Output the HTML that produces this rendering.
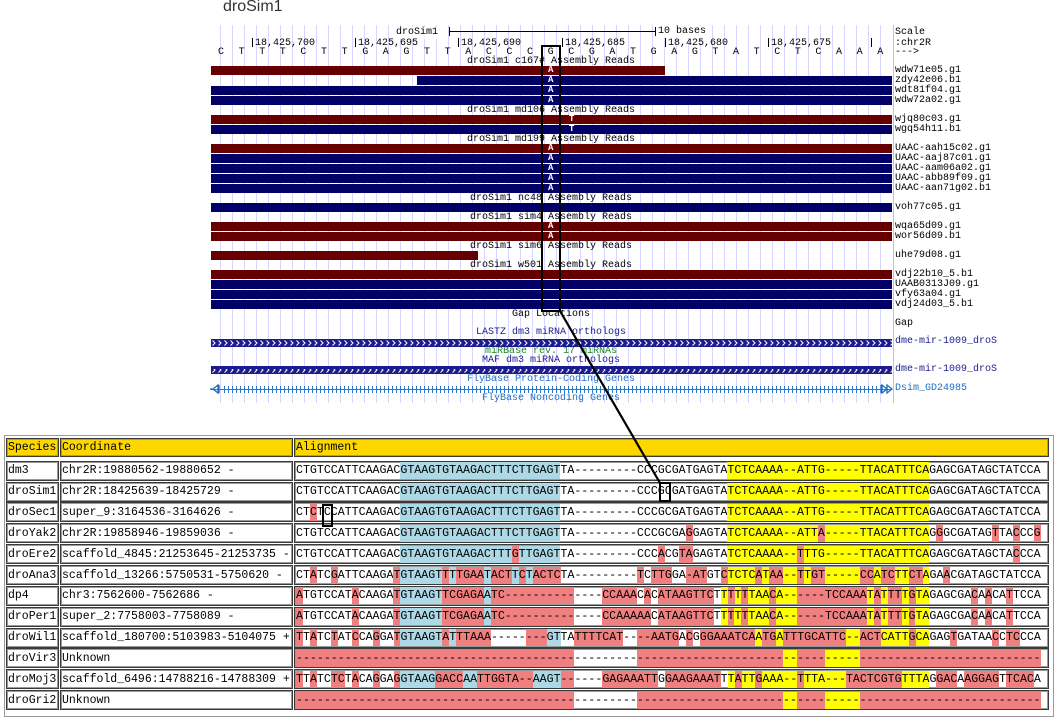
<!DOCTYPE html>
<html><head><meta charset="utf-8">
<style>
*{margin:0;padding:0;box-sizing:border-box}
body{width:1058px;height:717px;background:#fff;position:relative;overflow:hidden;font-family:"Liberation Mono",monospace}
.a{position:absolute}
.t{position:absolute;font-size:10px;line-height:12px;white-space:pre;color:#000}
.c{position:absolute;font-size:10px;line-height:12px;white-space:pre;width:300px;left:401px;text-align:center}
.bar{position:absolute;left:211px;width:681px;height:9px}
.R{background:#660000}.B{background:#000066}
.lt{position:absolute;font-size:9px;line-height:9px;color:#fff;font-weight:bold}
.cell{position:absolute;border:1px solid #3a3a3a;box-shadow:inset 0 0 0 1px #9a9a9a;background:#fff;height:20px}
.h{background:#ffd700;height:19px}
.tx{position:absolute;font-size:11.5px;line-height:17px;white-space:pre;color:#000}
.al{position:absolute;font-size:11.6px;line-height:17px;white-space:pre;color:#000}
.al span{display:inline-block;height:17px}
.r{background:#f08080}.b{background:#add8e6}.y{background:#ffff00}
</style></head><body>

<div class="a" style="left:223px;top:-2px;font-family:'Liberation Sans',sans-serif;font-size:16px;color:#333">droSim1</div>

<div class="a" style="left:220px;top:25px;width:672px;height:378px;background:repeating-linear-gradient(to right,#d6d6ff 0 1px,transparent 1px 12px)"></div>
<div class="a" style="left:893px;top:25px;width:1px;height:378px;background:#f0b0b0"></div>

<div class="t" style="left:396px;top:27px;background:#fff">droSim1</div>
<div class="a" style="left:449px;top:31px;width:206px;height:1px;background:#000"></div>
<div class="a" style="left:449px;top:27px;width:1px;height:9px;background:#000"></div>
<div class="a" style="left:655px;top:27px;width:1px;height:9px;background:#000"></div>
<div class="t" style="left:658px;top:26px;background:#fff">10 bases</div>

<div class="a" style="left:252px;top:38px;width:1px;height:9px;background:#000"></div>
<div class="a" style="left:355px;top:38px;width:1px;height:9px;background:#000"></div>
<div class="a" style="left:458px;top:38px;width:1px;height:9px;background:#000"></div>
<div class="a" style="left:562px;top:38px;width:1px;height:9px;background:#000"></div>
<div class="a" style="left:665px;top:38px;width:1px;height:9px;background:#000"></div>
<div class="a" style="left:768px;top:38px;width:1px;height:9px;background:#000"></div>
<div class="a" style="left:871px;top:38px;width:1px;height:9px;background:#000"></div>
<div class="t" style="left:255px;top:38px">18,425,700</div>
<div class="t" style="left:358px;top:38px">18,425,695</div>
<div class="t" style="left:461px;top:38px">18,425,690</div>
<div class="t" style="left:565px;top:38px">18,425,685</div>
<div class="t" style="left:668px;top:38px">18,425,680</div>
<div class="t" style="left:771px;top:38px">18,425,675</div>

<div class="t" style="left:218px;top:47px;letter-spacing:14.6px">CTTTCTTGAGTTACCCGCGATGAGTATCTCAAA</div>

<div class="c" style="top:56px">droSim1 c167# Assembly Reads</div>
<div class="c" style="top:105px">droSim1 md106 Assembly Reads</div>
<div class="c" style="top:134px">droSim1 md199 Assembly Reads</div>
<div class="c" style="top:193px">droSim1 nc48 Assembly Reads</div>
<div class="c" style="top:212px">droSim1 sim4 Assembly Reads</div>
<div class="c" style="top:241px">droSim1 sim6 Assembly Reads</div>
<div class="c" style="top:260px">droSim1 w501 Assembly Reads</div>
<div class="c" style="top:309px">Gap Locations</div>
<div class="c" style="top:327px;color:#1c1c8e">LASTZ dm3 miRNA orthologs</div>
<div class="c" style="top:346px;color:#1a8a1a">miRBase rev. 17 miRNAs</div>
<div class="c" style="top:355px;color:#1c1c8e">MAF dm3 miRNA orthologs</div>
<div class="c" style="top:374px;color:#1f6fc0">FlyBase Protein-Coding Genes</div>
<div class="c" style="top:393px;color:#1f6fc0">FlyBase Noncoding Genes</div>

<div class="bar R" style="top:66px;width:454px"></div>
<div class="bar B" style="top:76px;left:417px;width:475px"></div>
<div class="bar B" style="top:86px"></div>
<div class="bar B" style="top:96px"></div>
<div class="bar R" style="top:115px"></div>
<div class="bar B" style="top:125px"></div>
<div class="bar R" style="top:144px"></div>
<div class="bar B" style="top:154px"></div>
<div class="bar B" style="top:164px"></div>
<div class="bar B" style="top:174px"></div>
<div class="bar B" style="top:184px"></div>
<div class="bar B" style="top:203px"></div>
<div class="bar R" style="top:222px"></div>
<div class="bar R" style="top:232px"></div>
<div class="bar R" style="top:251px;width:267px"></div>
<div class="bar R" style="top:270px"></div>
<div class="bar B" style="top:280px"></div>
<div class="bar B" style="top:290px"></div>
<div class="bar B" style="top:300px"></div>

<div class="lt" style="left:548px;top:66px">A</div>
<div class="lt" style="left:548px;top:76px">A</div>
<div class="lt" style="left:548px;top:86px">A</div>
<div class="lt" style="left:548px;top:96px">A</div>
<div class="lt" style="left:569px;top:115px">T</div>
<div class="lt" style="left:569px;top:125px">T</div>
<div class="lt" style="left:548px;top:144px">A</div>
<div class="lt" style="left:548px;top:154px">A</div>
<div class="lt" style="left:548px;top:164px">A</div>
<div class="lt" style="left:548px;top:174px">A</div>
<div class="lt" style="left:548px;top:184px">A</div>
<div class="lt" style="left:548px;top:222px">A</div>
<div class="lt" style="left:548px;top:232px">A</div>

<svg class="a" style="left:211px;top:339px" width="681" height="36">
<defs><pattern id="cv" x="0" y="0" width="6" height="8" patternUnits="userSpaceOnUse"><path d="M1.5 1.5L4 4L1.5 6.5" stroke="#fff" stroke-width="1" fill="none"/></pattern></defs>
<rect x="0" y="0" width="681" height="8" fill="#1c1c8e"/><rect x="0" y="0" width="681" height="8" fill="url(#cv)"/>
<rect x="0" y="27" width="681" height="8" fill="#1c1c8e"/><rect x="0" y="27" width="681" height="8" fill="url(#cv)" transform="translate(0,3)" />
</svg>

<div class="a" style="left:211px;top:389px;width:681px;height:1px;background:#2a78c8"></div>
<div class="a" style="left:222px;top:386px;width:658px;height:7px;background:repeating-linear-gradient(to right,transparent 0 2px,#2a78c8 2px 3px,transparent 3px 4px)"></div>
<svg class="a" style="left:209px;top:383px" width="14" height="12"><path d="M1 6H4M9 2L4 6L9 10ZM10 2V10" stroke="#1f6fc0" fill="none" stroke-width="1.3"/></svg>
<svg class="a" style="left:880px;top:383px" width="14" height="12"><path d="M1 2V10M2 2L7 6L2 10ZM7 2L12 6L7 10Z" stroke="#1f6fc0" fill="none" stroke-width="1.3"/></svg>

<div class="t" style="left:895px;top:27px">Scale</div>
<div class="t" style="left:895px;top:38px">:chr2R</div>
<div class="t" style="left:895px;top:47px">---&gt;</div>
<div class="t" style="left:895px;top:65px">wdw71e05.g1</div>
<div class="t" style="left:895px;top:75px">zdy42e06.b1</div>
<div class="t" style="left:895px;top:85px">wdt81f04.g1</div>
<div class="t" style="left:895px;top:95px">wdw72a02.g1</div>
<div class="t" style="left:895px;top:114px">wjq80c03.g1</div>
<div class="t" style="left:895px;top:124px">wgq54h11.b1</div>
<div class="t" style="left:895px;top:143px">UAAC-aah15c02.g1</div>
<div class="t" style="left:895px;top:153px">UAAC-aaj87c01.g1</div>
<div class="t" style="left:895px;top:163px">UAAC-aam06a02.g1</div>
<div class="t" style="left:895px;top:173px">UAAC-abb89f09.g1</div>
<div class="t" style="left:895px;top:183px">UAAC-aan71g02.b1</div>
<div class="t" style="left:895px;top:202px">voh77c05.g1</div>
<div class="t" style="left:895px;top:221px">wqa65d09.g1</div>
<div class="t" style="left:895px;top:231px">wor56d09.b1</div>
<div class="t" style="left:895px;top:250px">uhe79d08.g1</div>
<div class="t" style="left:895px;top:269px">vdj22b10_5.b1</div>
<div class="t" style="left:895px;top:279px">UAAB0313J09.g1</div>
<div class="t" style="left:895px;top:289px">vfy63a04.g1</div>
<div class="t" style="left:895px;top:299px">vdj24d03_5.b1</div>
<div class="t" style="left:895px;top:318px">Gap</div>
<div class="t" style="left:895px;top:336px;color:#1c1c8e">dme-mir-1009_droS</div>
<div class="t" style="left:895px;top:364px;color:#1c1c8e">dme-mir-1009_droS</div>
<div class="t" style="left:895px;top:383px;color:#1f6fc0">Dsim_GD24985</div>

<div class="a" style="left:541px;top:45px;width:20px;height:267px;border:2px solid #000"></div>

<div class="a" style="left:4px;top:435px;width:1050px;height:282px;border:1px solid #999"></div>

<div class="cell h" style="left:6px;top:438px;width:53px"></div>
<div class="cell h" style="left:60px;top:438px;width:233px"></div>
<div class="cell h" style="left:294px;top:438px;width:755px"></div>
<div class="tx" style="left:8px;top:439px">Species</div>
<div class="tx" style="left:62px;top:439px">Coordinate</div>
<div class="tx" style="left:296px;top:439px">Alignment</div>

<div class="cell" style="left:6px;top:460.7px;width:53px"></div><div class="cell" style="left:60px;top:460.7px;width:233px"></div><div class="cell" style="left:294px;top:460.7px;width:755px"></div>
<div class="cell" style="left:6px;top:481.6px;width:53px"></div><div class="cell" style="left:60px;top:481.6px;width:233px"></div><div class="cell" style="left:294px;top:481.6px;width:755px"></div>
<div class="cell" style="left:6px;top:502.4px;width:53px"></div><div class="cell" style="left:60px;top:502.4px;width:233px"></div><div class="cell" style="left:294px;top:502.4px;width:755px"></div>
<div class="cell" style="left:6px;top:523.3px;width:53px"></div><div class="cell" style="left:60px;top:523.3px;width:233px"></div><div class="cell" style="left:294px;top:523.3px;width:755px"></div>
<div class="cell" style="left:6px;top:544.1px;width:53px"></div><div class="cell" style="left:60px;top:544.1px;width:233px"></div><div class="cell" style="left:294px;top:544.1px;width:755px"></div>
<div class="cell" style="left:6px;top:565px;width:53px"></div><div class="cell" style="left:60px;top:565px;width:233px"></div><div class="cell" style="left:294px;top:565px;width:755px"></div>
<div class="cell" style="left:6px;top:585.8px;width:53px"></div><div class="cell" style="left:60px;top:585.8px;width:233px"></div><div class="cell" style="left:294px;top:585.8px;width:755px"></div>
<div class="cell" style="left:6px;top:606.7px;width:53px"></div><div class="cell" style="left:60px;top:606.7px;width:233px"></div><div class="cell" style="left:294px;top:606.7px;width:755px"></div>
<div class="cell" style="left:6px;top:627.5px;width:53px"></div><div class="cell" style="left:60px;top:627.5px;width:233px"></div><div class="cell" style="left:294px;top:627.5px;width:755px"></div>
<div class="cell" style="left:6px;top:648.4px;width:53px"></div><div class="cell" style="left:60px;top:648.4px;width:233px"></div><div class="cell" style="left:294px;top:648.4px;width:755px"></div>
<div class="cell" style="left:6px;top:669.2px;width:53px"></div><div class="cell" style="left:60px;top:669.2px;width:233px"></div><div class="cell" style="left:294px;top:669.2px;width:755px"></div>
<div class="cell" style="left:6px;top:690.1px;width:53px"></div><div class="cell" style="left:60px;top:690.1px;width:233px"></div><div class="cell" style="left:294px;top:690.1px;width:755px"></div>

<div class="tx" style="left:8px;top:462.3px">dm3</div><div class="tx" style="left:62px;top:462.3px">chr2R:19880562-19880652 -</div>
<div class="tx" style="left:8px;top:483.2px">droSim1</div><div class="tx" style="left:62px;top:483.2px">chr2R:18425639-18425729 -</div>
<div class="tx" style="left:8px;top:504px">droSec1</div><div class="tx" style="left:62px;top:504px">super_9:3164536-3164626 -</div>
<div class="tx" style="left:8px;top:524.9px">droYak2</div><div class="tx" style="left:62px;top:524.9px">chr2R:19858946-19859036 -</div>
<div class="tx" style="left:8px;top:545.7px">droEre2</div><div class="tx" style="left:62px;top:545.7px">scaffold_4845:21253645-21253735 -</div>
<div class="tx" style="left:8px;top:566.6px">droAna3</div><div class="tx" style="left:62px;top:566.6px">scaffold_13266:5750531-5750620 -</div>
<div class="tx" style="left:8px;top:587.4px">dp4</div><div class="tx" style="left:62px;top:587.4px">chr3:7562600-7562686 -</div>
<div class="tx" style="left:8px;top:608.3px">droPer1</div><div class="tx" style="left:62px;top:608.3px">super_2:7758003-7758089 -</div>
<div class="tx" style="left:8px;top:629.1px">droWil1</div><div class="tx" style="left:62px;top:629.1px">scaffold_180700:5103983-5104075 +</div>
<div class="tx" style="left:8px;top:650px">droVir3</div><div class="tx" style="left:62px;top:650px">Unknown</div>
<div class="tx" style="left:8px;top:670.8px">droMoj3</div><div class="tx" style="left:62px;top:670.8px">scaffold_6496:14788216-14788309 +</div>
<div class="tx" style="left:8px;top:691.7px">droGri2</div><div class="tx" style="left:62px;top:691.7px">Unknown</div>

<div class="al" style="left:296px;top:462.3px">CTGTCCATTCAAGAC<span class="b">GTAAGTGTAAGACTTTCTTGAGT</span>TA---------CCCGCGATGAGTA<span class="y">TCTCAAAA--ATTG-----TTACATTTCA</span>GAGCGATAGCTATCCA</div>
<div class="al" style="left:296px;top:483.2px">CTGTCCATTCAAGAC<span class="b">GTAAGTGTAAGACTTTCTTGAGT</span>TA---------CCCGCGATGAGTA<span class="y">TCTCAAAA--ATTG-----TTACATTTCA</span>GAGCGATAGCTATCCA</div>
<div class="al" style="left:296px;top:504px">CT<span class="r">C</span>TCCATTCAAGAC<span class="b">GTAAGTGTAAGACTTTCTTGAGT</span>TA---------CCCGCGATGAGTA<span class="y">TCTCAAAA--ATTG-----TTACATTTCA</span>GAGCGATAGCTATCCA</div>
<div class="al" style="left:296px;top:524.9px">CTGTCCATTCAAGAC<span class="b">GTAAGTGTAAGACTTTCTTGAGT</span>TA---------CCCGCGA<span class="r">G</span>GAGTA<span class="y">TCTCAAAA--ATT</span><span class="r">A</span><span class="y">-----TTACATTTCA</span>G<span class="r">G</span>GCGATAG<span class="r">T</span>TA<span class="r">C</span>CC<span class="r">G</span></div>
<div class="al" style="left:296px;top:545.7px">CTGTCCATTCAAGAC<span class="b">GTAAGTGTAAGACTTT</span><span class="r">G</span><span class="b">TTGAGT</span>TA---------CCC<span class="r">A</span>CG<span class="r">TA</span>GAGTA<span class="y">TCTCAAAA--</span><span class="r">T</span><span class="y">TTG-----TTACATTTCA</span>GAGCGATAGCTA<span class="r">C</span>CCA</div>
<div class="al" style="left:296px;top:566.6px">CT<span class="r">A</span>TC<span class="r">G</span>ATTCAAGA<span class="r">T</span><span class="b">GTAAGT</span><span class="r">T</span><span class="b">T</span><span class="r">TGAA</span><span class="b">T</span><span class="r">ACT</span><span class="b">T</span><span class="r">C</span><span class="b">T</span><span class="r">ACTC</span>TA---------<span class="r">T</span>C<span class="r">TTG</span>GA<span class="r">-AT</span>GT<span class="r">C</span><span class="y">TCTC</span><span class="r">A</span><span class="y">T</span><span class="r">AA</span><span class="y">--</span><span class="r">T</span><span class="y">T</span><span class="r">GT</span><span class="y">-----</span><span class="r">CC</span><span class="y">A</span><span class="r">TC</span><span class="y">TT</span><span class="r">CT</span><span class="y">A</span>GA<span class="r">A</span>CGATAGCTATCCA</div>
<div class="al" style="left:296px;top:587.4px"><span class="r">A</span>TGTCCAT<span class="r">A</span>CAAGA<span class="r">T</span><span class="b">GTAAGT</span><span class="r">TCGAGA</span><span class="b">A</span><span class="r">TC----------</span>----<span class="r">CCAAA</span>C<span class="r">A</span>C<span class="r">ATAAGTTC</span>T<span class="y">T</span><span class="r">T</span><span class="y">T</span><span class="r">T</span><span class="y">TAA</span><span class="r">C</span><span class="y">A--</span><span class="r">----TCCAAA</span><span class="y">T</span><span class="r">A</span><span class="y">T</span><span class="r">TT</span><span class="y">T</span><span class="r">G</span><span class="y">TA</span>GAGCGA<span class="r">C</span>A<span class="r">A</span>CA<span class="r">T</span>TCCA</div>
<div class="al" style="left:296px;top:608.3px"><span class="r">A</span>TGTCCAT<span class="r">A</span>CAAGA<span class="r">T</span><span class="b">GTAAGT</span><span class="r">TCGAGA</span><span class="b">A</span><span class="r">TC----------</span>----<span class="r">CCAAAAA</span>C<span class="r">ATAAGTTC</span>T<span class="y">T</span><span class="r">T</span><span class="y">T</span><span class="r">T</span><span class="y">TAA</span><span class="r">C</span><span class="y">A--</span><span class="r">----TCCAAA</span><span class="y">T</span><span class="r">A</span><span class="y">T</span><span class="r">TT</span><span class="y">T</span><span class="r">G</span><span class="y">TA</span>GAGCGA<span class="r">C</span>A<span class="r">A</span>CA<span class="r">T</span>TCCA</div>
<div class="al" style="left:296px;top:629.1px"><span class="r">T</span>T<span class="r">A</span>TC<span class="r">T</span>AT<span class="r">C</span>CA<span class="r">G</span>GA<span class="r">T</span><span class="b">GTAAGT</span><span class="r">A</span><span class="b">T</span><span class="r">TTAAA</span>-----<span class="r">---</span><span class="b">GT</span>TA<span class="r">TTTTCAT</span>--<span class="r">--AATG</span>A<span class="r">C</span>G<span class="r">GGAAATCA</span><span class="y">A</span><span class="r">TG</span><span class="y">A</span><span class="r">TTTGCATTC</span><span class="y">--</span><span class="r">ACT</span><span class="y">CATT</span><span class="r">G</span><span class="y">CA</span>GAG<span class="r">T</span>GATAA<span class="r">C</span>C<span class="r">TC</span>CCA</div>
<div class="al" style="left:296px;top:650px"><span class="r">----------------------------------------</span>---------<span class="r">---------------------</span><span class="y">--</span><span class="r">----</span><span class="y">-----</span><span class="r">--------------------------</span></div>
<div class="al" style="left:296px;top:670.8px"><span class="r">T</span>T<span class="r">A</span>TC<span class="r">TC</span>T<span class="r">A</span>CA<span class="r">G</span>GA<span class="r">G</span><span class="b">GTAAG</span><span class="r">GACC</span><span class="b">AA</span><span class="r">TTGGTA--</span><span class="b">AAGT</span><span class="r">--</span>----<span class="r">GAGAAATT</span>G<span class="r">GAAGAAAT</span>T<span class="y">T</span><span class="r">A</span><span class="y">TT</span><span class="r">G</span><span class="y">AAA--</span><span class="r">T</span><span class="y">TTA</span><span class="y">---</span><span class="r">TACTCGTG</span><span class="y">TTTA</span>G<span class="r">GAC</span>A<span class="r">AGGAG</span>T<span class="r">TCAC</span>A</div>
<div class="al" style="left:296px;top:691.7px"><span class="r">----------------------------------------</span>---------<span class="r">---------------------</span><span class="y">--</span><span class="r">----</span><span class="y">-----</span><span class="r">--------------------------</span></div>

<div class="a" style="left:659px;top:481.5px;width:12px;height:20px;border:2px solid #000"></div>
<div class="a" style="left:322px;top:504px;width:11px;height:23px;border:2px solid #000"></div>
<svg class="a" style="left:0;top:0" width="1058" height="717"><line x1="560" y1="311" x2="660" y2="483" stroke="#000" stroke-width="2.2"/></svg>

</body></html>
